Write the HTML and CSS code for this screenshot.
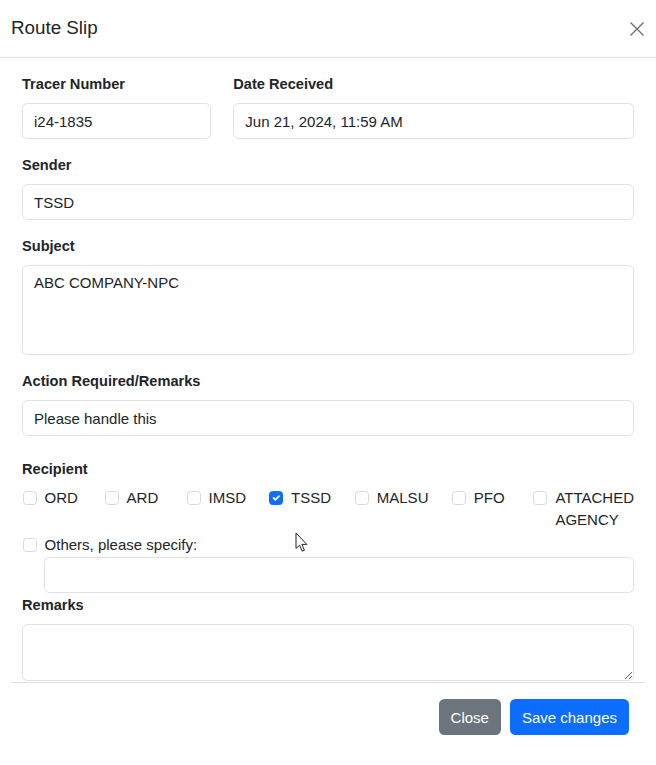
FILE: index.html
```html
<!DOCTYPE html>
<html lang="en">
<head>
<meta charset="utf-8">
<title>Route Slip</title>
<link rel="stylesheet" href="styles.css">
</head>
<body>
<div class="modal">
  <div class="modal-header">
    <h5 class="modal-title">Route Slip</h5>
    <button class="btn-close" type="button" aria-label="Close">
      <svg width="16" height="16" viewBox="0 0 16 16"><path d="M1.5 1.5 L14.5 14.5 M14.5 1.5 L1.5 14.5" stroke="#6f6f6f" stroke-width="1.4" fill="none"/></svg>
    </button>
  </div>
  <div class="modal-body">
    <div class="row">
      <div class="group col-narrow">
        <label class="form-label">Tracer Number</label>
        <input class="form-control" type="text" value="i24-1835">
      </div>
      <div class="group col-wide">
        <label class="form-label">Date Received</label>
        <input class="form-control" type="text" value="Jun 21, 2024, 11:59 AM">
      </div>
    </div>
    <div class="group">
      <label class="form-label">Sender</label>
      <input class="form-control" type="text" value="TSSD">
    </div>
    <div class="group">
      <label class="form-label">Subject</label>
      <textarea class="form-control subject">ABC COMPANY-NPC</textarea>
    </div>
    <div class="group">
      <label class="form-label">Action Required/Remarks</label>
      <input class="form-control" type="text" value="Please handle this">
    </div>
    <div class="recipient">
      <label class="form-label recipient-label">Recipient</label>
      <div class="check-row">
        <label class="check"><input type="checkbox"><span>ORD</span></label>
        <label class="check"><input type="checkbox"><span>ARD</span></label>
        <label class="check"><input type="checkbox"><span>IMSD</span></label>
        <label class="check"><input type="checkbox" checked><span>TSSD</span></label>
        <label class="check"><input type="checkbox"><span>MALSU</span></label>
        <label class="check"><input type="checkbox"><span>PFO</span></label>
        <label class="check"><input type="checkbox"><span>ATTACHED AGENCY</span></label>
      </div>
      <label class="check others"><input type="checkbox"><span>Others, please specify:</span></label>
      <input class="form-control others-input" type="text" value="">
    </div>
    <div class="group">
      <label class="form-label">Remarks</label>
      <textarea class="form-control remarks"></textarea>
    </div>
  </div>
  <div class="modal-footer">
    <button class="btn btn-secondary" type="button">Close</button>
    <button class="btn btn-primary" type="button">Save changes</button>
  </div>
  <svg class="cursor" width="14" height="22" viewBox="0 0 14 22"><path d="M1 1 L1 16.5 L4.6 13.2 L7.2 19.2 L9.4 18.2 L6.9 12.4 L11.8 12.4 Z" fill="#fff" stroke="#222" stroke-width="1" stroke-linejoin="round"/></svg>
</div>
</body>
</html>
```
FILE: styles.css
```css
* { box-sizing: border-box; }

body {
  margin: 0;
  background: #fff;
  color: #212529;
  font-family: "Liberation Sans", Arial, sans-serif;
}

.modal {
  position: relative;
  width: 656px;
  height: 765px;
  display: flex;
  flex-direction: column;
  background: #fff;
}

.modal-header {
  flex: 0 0 58px;
  display: flex;
  align-items: center;
  justify-content: space-between;
  padding: 0 11px 0 11px;
  border-bottom: 1px solid #dee2e6;
}

.modal-title {
  margin: 0;
  font-size: 18.8px;
  font-weight: 400;
  line-height: 1.5;
  color: #212529;
}

.btn-close {
  width: 16px;
  height: 16px;
  padding: 0;
  border: 0;
  background: transparent;
  display: flex;
}

.modal-body {
  flex: 0 0 624px;
  overflow: hidden;
  padding: 14px 22px 0;
}

.row {
  display: flex;
  gap: 22px;
}

.col-narrow { flex: 0 0 calc((100% + 22px) / 3 - 22px); }
.col-wide { flex: 1 1 auto; }

.group { margin-bottom: 14px; }

.form-label {
  display: block;
  font-size: 14.6px;
  font-weight: 700;
  line-height: 21px;
  padding-top: 2px;
  margin-bottom: 8px;
  color: #212529;
}

.form-control {
  display: block;
  width: 100%;
  height: 36px;
  padding: 0 11px;
  font-family: "Liberation Sans", Arial, sans-serif;
  font-size: 15px;
  line-height: 22.5px;
  color: #212529;
  background: #fff;
  border: 1px solid #dee2e6;
  border-radius: 5.5px;
  outline: none;
}

textarea.form-control {
  padding: 5.6px 11px;
  resize: vertical;
}

.subject { height: 90px; resize: none; }
textarea.subject { resize: none; }
.remarks { height: 57px; }

.recipient { padding-top: 7px; }

.recipient-label { margin-bottom: 7px; }

.check-row {
  display: grid;
  grid-template-columns: 82px 82px 82.4px 85.8px 97px 81.6px 1fr;
}

.check {
  display: flex;
  align-items: flex-start;
  gap: 8px;
  font-size: 15px;
  line-height: 22px;
  color: #212529;
}

.check input {
  appearance: none;
  -webkit-appearance: none;
  flex: 0 0 14px;
  width: 14px;
  height: 14px;
  margin: 4px 0 0 0.6px;
  border: 1px solid #d6dadf;
  border-radius: 3.5px;
  background: #fff;
}

.check input:checked {
  background-color: #0d6efd;
  border-color: #0d6efd;
  background-image: url("data:image/svg+xml,%3csvg xmlns='http://www.w3.org/2000/svg' viewBox='0 0 20 20'%3e%3cpath fill='none' stroke='%23fff' stroke-linecap='round' stroke-linejoin='round' stroke-width='3' d='m6 10 3 3 6-6'/%3e%3c/svg%3e");
  background-size: 100% 100%;
}

.check span { min-width: 0; }

.others { margin-top: 3px; }

.others-input {
  width: calc(100% - 22px);
  margin-left: 22px;
  margin-top: 1px;
}

.modal-footer {
  flex: 0 0 auto;
  margin: 0 11px;
  padding: 16px 16px 0;
  border-top: 1px solid #dee2e6;
  display: flex;
  justify-content: flex-end;
  gap: 9px;
}

.btn {
  height: 36px;
  padding: 0 12px;
  border: 0;
  border-radius: 5.5px;
  font-family: "Liberation Sans", Arial, sans-serif;
  font-size: 15px;
  color: #fff;
}

.btn-secondary { background: #6c757d; }
.btn-primary { background: #0d6efd; }

.cursor {
  position: absolute;
  left: 295px;
  top: 532px;
}
```
